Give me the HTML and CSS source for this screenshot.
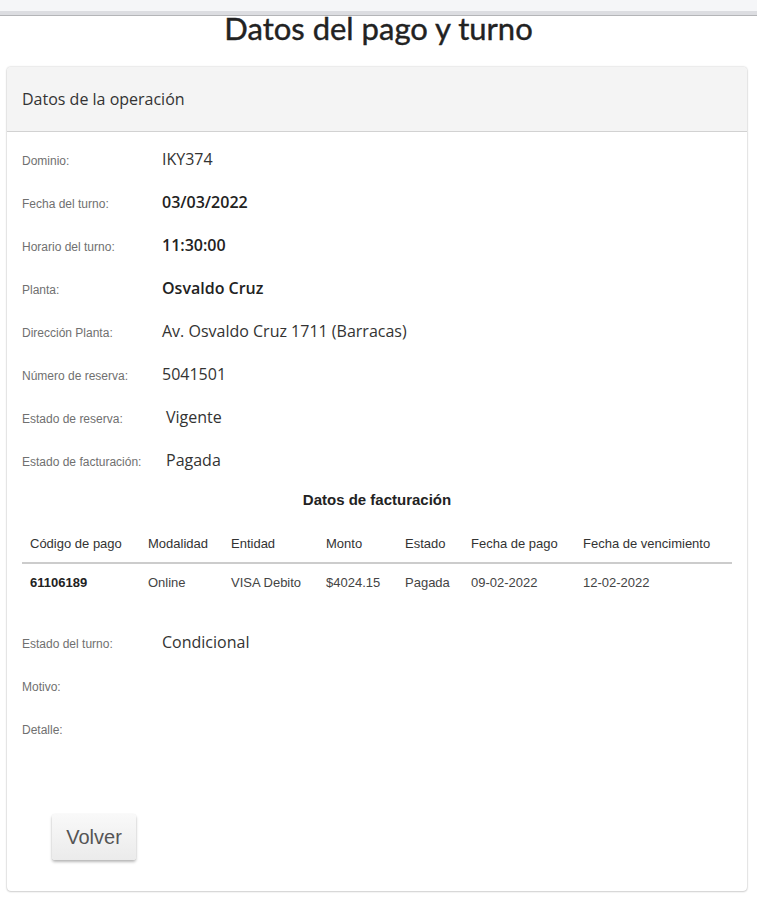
FILE: index.html
```html
<!DOCTYPE html>
<html lang="es">
<head>
<meta charset="utf-8">
<title>Datos del pago y turno</title>
<link rel="stylesheet" href="styles.css">
</head>
<body>
<div class="topbar"></div>
<h1 class="title">Datos del pago y turno</h1>
<div class="card">
  <div class="card-header">Datos de la operación</div>
  <div class="card-body">
    <div class="row"><span class="label">Dominio:</span><span class="value">IKY374</span></div>
    <div class="row"><span class="label">Fecha del turno:</span><span class="value strong">03/03/2022</span></div>
    <div class="row"><span class="label">Horario del turno:</span><span class="value strong">11:30:00</span></div>
    <div class="row"><span class="label">Planta:</span><span class="value strong">Osvaldo Cruz</span></div>
    <div class="row"><span class="label">Dirección Planta:</span><span class="value">Av. Osvaldo Cruz 1711 (Barracas)</span></div>
    <div class="row"><span class="label">Número de reserva:</span><span class="value">5041501</span></div>
    <div class="row"><span class="label">Estado de reserva:</span><span class="value shifted">Vigente</span></div>
    <div class="row"><span class="label">Estado de facturación:</span><span class="value shifted">Pagada</span></div>

    <h2 class="subtitle">Datos de facturación</h2>
    <table class="billing">
      <colgroup>
        <col class="c1"><col class="c2"><col class="c3"><col class="c4"><col class="c5"><col class="c6"><col class="c7">
      </colgroup>
      <thead>
        <tr><th>Código de pago</th><th>Modalidad</th><th>Entidad</th><th>Monto</th><th>Estado</th><th>Fecha de pago</th><th>Fecha de vencimiento</th></tr>
      </thead>
      <tbody>
        <tr><td class="code">61106189</td><td>Online</td><td>VISA Debito</td><td>$4024.15</td><td>Pagada</td><td>09-02-2022</td><td>12-02-2022</td></tr>
      </tbody>
    </table>

    <div class="status">
      <div class="row"><span class="label">Estado del turno:</span><span class="value">Condicional</span></div>
      <div class="row"><span class="label">Motivo:</span><span class="value"></span></div>
      <div class="row"><span class="label">Detalle:</span><span class="value"></span></div>
    </div>

    <div class="actions"><button class="btn" type="button">Volver</button></div>
  </div>
</div>
</body>
</html>
```

FILE: styles.css
```css
* { box-sizing: border-box; }
html, body { margin: 0; padding: 0; background: #fff; }
body { font-family: "Open Sans", "Liberation Sans", sans-serif; color: #333; }

.topbar {
  height: 15px;
  background: #f5f6f8;
  border-bottom: 4px solid #dcdde1;
  box-shadow: 0 1px 0 #b4b5b8;
}

.title {
  margin: 0;
  height: 52px;
  line-height: 26px;
  text-align: center;
  font-family: "Lato", "Noto Sans", sans-serif;
  font-weight: 400;
  font-size: 31px;
  color: #222;
  -webkit-text-stroke: 0.4px #222;
}

.card {
  margin: 0 10px 6px 7px;
  border-radius: 4px;
  background: #fff;
  box-shadow: 0 0 2px rgba(0,0,0,0.28), 0 1px 2px rgba(0,0,0,0.12);
  overflow: hidden;
}

.card-header {
  height: 65px;
  display: flex;
  align-items: center;
  padding: 0 15px;
  background: #f4f4f4;
  border-bottom: 1px solid #d2d2d2;
  font-size: 16px;
  color: #333;
}

.card-body { padding: 5px 15px 31px; }

.row {
  height: 43px;
  display: flex;
  align-items: center;
}
.label {
  width: 140px;
  flex: none;
  font-family: "Liberation Sans", Arial, sans-serif;
  font-size: 12px;
  color: #707070;
  padding-top: 4px;
}
.value {
  font-size: 16px;
  color: #333;
}
.value.strong { font-weight: 600; color: #222; }
.value.shifted { padding-left: 4px; }

.subtitle {
  margin: 9px 0 0;
  line-height: 20px;
  text-align: center;
  font-family: "Liberation Sans", Arial, sans-serif;
  font-weight: 700;
  font-size: 15px;
  color: #222;
}

.billing {
  margin-top: 14px;
  width: 710px;
  border-collapse: collapse;
  table-layout: fixed;
  font-family: "Liberation Sans", Arial, sans-serif;
  font-size: 13px;
  color: #333;
}
.c1 { width: 118px; }
.c2 { width: 83px; }
.c3 { width: 95px; }
.c4 { width: 79px; }
.c5 { width: 66px; }
.c6 { width: 112px; }
.c7 { width: 157px; }

.billing th {
  text-align: left;
  font-weight: 400;
  height: 39px;
  padding: 1px 8px 0;
  border-bottom: 2px solid #cccccc;
  white-space: nowrap;
}
.billing td {
  height: 35px;
  padding: 2px 8px 0;
  white-space: nowrap;
  color: #444;
}
.billing td.code { font-weight: 700; color: #222; }

.status { margin-top: 22px; }

.actions { margin-top: 65px; padding-left: 30px; }
.btn {
  width: 84px;
  height: 46px;
  border: none;
  border-radius: 3px;
  background: linear-gradient(#f9f9f9, #ebebeb);
  box-shadow: 0 2px 3px rgba(0,0,0,0.28), 0 0 1px rgba(0,0,0,0.12);
  font-family: "Liberation Sans", Arial, sans-serif;
  font-size: 20px;
  color: #555;
  padding: 0;
  cursor: pointer;
}
```
